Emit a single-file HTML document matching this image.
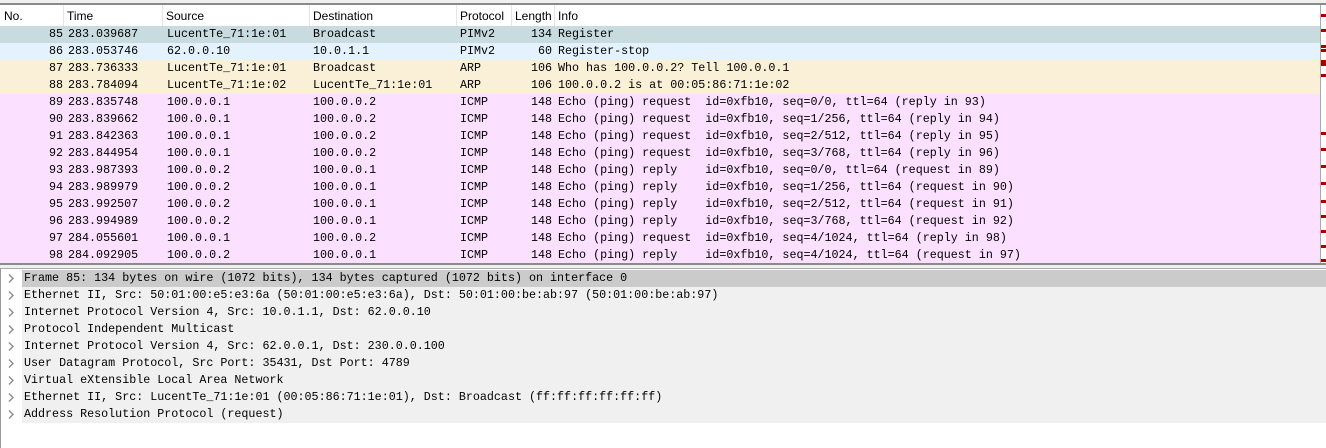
<!DOCTYPE html>
<html><head><meta charset="utf-8"><style>
*{margin:0;padding:0;box-sizing:border-box}
body{width:1326px;height:448px;background:#fff;position:relative;overflow:hidden;font-family:"Liberation Mono",monospace;font-size:11.7px;color:#000}
.top{position:absolute;left:0;top:0;width:1326px;height:3px;background:#f0f0f0}
.topl{position:absolute;left:0;top:3px;width:1326px;height:2px;background:#8a8a8a}
.hdr{position:absolute;left:0;top:5px;width:1320px;height:21px;background:#fff;font-family:"Liberation Sans",sans-serif;font-size:12px}
.hdr span{position:absolute;top:4px}
.sep{position:absolute;top:0;width:1px;height:21px;background:#e5e5e5}
.row{position:absolute;left:0;width:1320px;height:17px;white-space:pre;line-height:17px}
.row span{position:absolute;top:0}
.r{text-align:right}
.sb{position:absolute;left:1320px;top:5px;width:1px;height:258px;background:#aaa}
.mk{position:absolute;left:1321px;width:5px;height:3px;background:#a00}
.bot{position:absolute;left:0;top:263px;width:1326px;height:2px;background:#8a8a8a}
.gap{position:absolute;left:0;top:265px;width:1326px;height:4px;background:#f0f0f0}
.gap2{position:absolute;left:0;top:268px;width:1326px;height:1px;background:#aaa}
.dl{position:absolute;left:0;top:269px;width:1px;height:179px;background:#999}
.d{position:absolute;left:22px;width:1304px;height:17px;line-height:17px;background:#f0f0f0;white-space:pre;padding-left:2px}
.d.s{background:#cbcbcb}
.ar{position:absolute;left:7px;width:8px;height:17px}
</style></head><body>
<div class="top"></div><div class="topl"></div>
<div class="hdr">
<span style="left:4px">No.</span><div class="sep" style="left:63px"></div>
<span style="left:67px">Time</span><div class="sep" style="left:162px"></div>
<span style="left:166px">Source</span><div class="sep" style="left:309px"></div>
<span style="left:313px">Destination</span><div class="sep" style="left:456px"></div>
<span style="left:460px">Protocol</span><div class="sep" style="left:511px"></div>
<span style="left:515px">Length</span><div class="sep" style="left:554px"></div>
<span style="left:558px">Info</span>
</div>
<div id="rows"></div>
<div class="sb"></div>
<div class="mk" style="top:14px"></div><div class="mk" style="top:29px"></div><div class="mk" style="top:45px"></div><div class="mk" style="top:49px"></div><div class="mk" style="top:60px"></div><div class="mk" style="top:63px"></div><div class="mk" style="top:74px"></div><div class="mk" style="top:132px"></div><div class="mk" style="top:148px"></div><div class="mk" style="top:165px"></div><div class="mk" style="top:182px"></div><div class="mk" style="top:200px"></div><div class="mk" style="top:215px"></div><div class="mk" style="top:230px"></div><div class="mk" style="top:245px"></div><div class="mk" style="top:259px"></div>
<div class="bot"></div><div class="gap"></div><div class="gap2"></div><div class="dl"></div>
<div id="det"></div>
<script>
var R=[
["85","283.039687","LucentTe_71:1e:01","Broadcast","PIMv2","134","Register","#c8dce0"],
["86","283.053746","62.0.0.10","10.0.1.1","PIMv2","60","Register-stop","#e4f2fd"],
["87","283.736333","LucentTe_71:1e:01","Broadcast","ARP","106","Who has 100.0.0.2? Tell 100.0.0.1","#faf0d7"],
["88","283.784094","LucentTe_71:1e:02","LucentTe_71:1e:01","ARP","106","100.0.0.2 is at 00:05:86:71:1e:02","#faf0d7"],
["89","283.835748","100.0.0.1","100.0.0.2","ICMP","148","Echo (ping) request  id=0xfb10, seq=0/0, ttl=64 (reply in 93)"],
["90","283.839662","100.0.0.1","100.0.0.2","ICMP","148","Echo (ping) request  id=0xfb10, seq=1/256, ttl=64 (reply in 94)"],
["91","283.842363","100.0.0.1","100.0.0.2","ICMP","148","Echo (ping) request  id=0xfb10, seq=2/512, ttl=64 (reply in 95)"],
["92","283.844954","100.0.0.1","100.0.0.2","ICMP","148","Echo (ping) request  id=0xfb10, seq=3/768, ttl=64 (reply in 96)"],
["93","283.987393","100.0.0.2","100.0.0.1","ICMP","148","Echo (ping) reply    id=0xfb10, seq=0/0, ttl=64 (request in 89)"],
["94","283.989979","100.0.0.2","100.0.0.1","ICMP","148","Echo (ping) reply    id=0xfb10, seq=1/256, ttl=64 (request in 90)"],
["95","283.992507","100.0.0.2","100.0.0.1","ICMP","148","Echo (ping) reply    id=0xfb10, seq=2/512, ttl=64 (request in 91)"],
["96","283.994989","100.0.0.2","100.0.0.1","ICMP","148","Echo (ping) reply    id=0xfb10, seq=3/768, ttl=64 (request in 92)"],
["97","284.055601","100.0.0.1","100.0.0.2","ICMP","148","Echo (ping) request  id=0xfb10, seq=4/1024, ttl=64 (reply in 98)"],
["98","284.092905","100.0.0.2","100.0.0.1","ICMP","148","Echo (ping) reply    id=0xfb10, seq=4/1024, ttl=64 (request in 97)"]];
var h="";R.forEach(function(r,i){var c=r[7]||"#fce0ff";h+='<div class="row" style="top:'+(26+i*17)+'px;background:'+c+'"><span class="r" style="left:0;width:63px">'+r[0]+'</span><span style="left:68px">'+r[1]+'</span><span style="left:167px">'+r[2]+'</span><span style="left:313px">'+r[3]+'</span><span style="left:460px">'+r[4]+'</span><span class="r" style="left:511px;width:41px">'+r[5]+'</span><span style="left:558px">'+r[6]+'</span></div>';});
document.getElementById("rows").innerHTML=h;
var D=["Frame 85: 134 bytes on wire (1072 bits), 134 bytes captured (1072 bits) on interface 0","Ethernet II, Src: 50:01:00:e5:e3:6a (50:01:00:e5:e3:6a), Dst: 50:01:00:be:ab:97 (50:01:00:be:ab:97)","Internet Protocol Version 4, Src: 10.0.1.1, Dst: 62.0.0.10","Protocol Independent Multicast","Internet Protocol Version 4, Src: 62.0.0.1, Dst: 230.0.0.100","User Datagram Protocol, Src Port: 35431, Dst Port: 4789","Virtual eXtensible Local Area Network","Ethernet II, Src: LucentTe_71:1e:01 (00:05:86:71:1e:01), Dst: Broadcast (ff:ff:ff:ff:ff:ff)","Address Resolution Protocol (request)"];
h="";D.forEach(function(t,i){var y=270+i*17;h+='<svg class="ar" style="top:'+y+'px" width="8" height="17" viewBox="0 0 8 17"><path d="M2 4.5 L6 8.5 L2 12.5" fill="none" stroke="#8a8a8a" stroke-width="1.4"/></svg><div class="d'+(i?'':' s')+'" style="top:'+y+'px">'+t+'</div>';});
document.getElementById("det").innerHTML=h;
</script>
</body></html>
